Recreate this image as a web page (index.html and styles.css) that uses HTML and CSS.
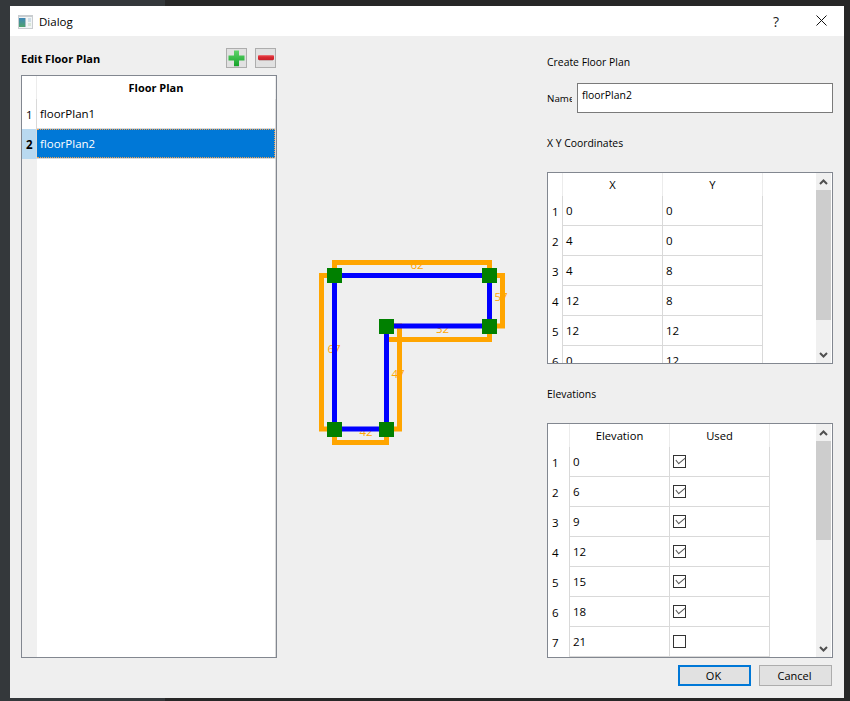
FILE: index.html
```html
<!DOCTYPE html>
<html lang="en">
<head>
<meta charset="utf-8">
<title>Dialog</title>
<link rel="stylesheet" href="styles.css">
</head>
<body>
<div class="window">
  <header class="titlebar">
    <svg class="app-icon" width="15" height="14" viewBox="0 0 15 14">
      <defs>
        <linearGradient id="pane" x1="0" y1="0" x2="0" y2="1">
          <stop offset="0" stop-color="#3d86b8"/>
          <stop offset="1" stop-color="#4fa36c"/>
        </linearGradient>
      </defs>
      <rect x="0" y="0" width="15" height="14" fill="#c9cdd0"/>
      <rect x="1" y="2" width="13" height="11" fill="#f2f5f6"/>
      <rect x="1" y="3" width="6" height="9" fill="url(#pane)"/>
      <rect x="7" y="3" width="1" height="9" fill="#a9bcc4"/>
      <rect x="10" y="3" width="3" height="4" fill="#cfdde6"/>
      <rect x="10" y="8" width="3" height="3" fill="#d8e6d8"/>
    </svg>
    <span class="title">Dialog</span>
    <span class="help">?</span>
    <svg class="close" width="11" height="11" viewBox="0 0 11 11">
      <path d="M0.500 0.500L10.500 10.500M10.500 0.500L0.500 10.500" stroke="#111" stroke-width="1" fill="none"/>
    </svg>
  </header>
  <main class="content">
    <section class="left">
      <div class="left-head">
        <h2 class="edit-title">Edit Floor Plan</h2>
        <div class="tool-buttons">
          <button class="tool">
            <svg width="17" height="17" viewBox="0 0 17 17">
              <defs>
                <linearGradient id="plus" x1="0" y1="0" x2="0" y2="1">
                  <stop offset="0" stop-color="#5fd46a"/>
                  <stop offset="1" stop-color="#16a32a"/>
                </linearGradient>
              </defs>
              <path d="M6 0.500h5v5h5.500v5H11v5.500H6V10.500H0.500v-5H6z" fill="url(#plus)"/>
              <rect x="6" y="16" width="5" height="1" fill="#b9c4ba"/>
            </svg>
          </button>
          <button class="tool">
            <svg width="16" height="6" viewBox="0 0 16 6">
              <defs>
                <linearGradient id="minus" x1="0" y1="0" x2="0" y2="1">
                  <stop offset="0" stop-color="#ee7f84"/>
                  <stop offset="0.350" stop-color="#dc2a32"/>
                  <stop offset="1" stop-color="#c9202a"/>
                </linearGradient>
              </defs>
              <rect width="16" height="5" rx="1" fill="url(#minus)"/>
              <rect x="1" y="5" width="14" height="1" fill="#c8b4b4"/>
            </svg>
          </button>
        </div>
      </div>
      <div class="table-box plans">
        <table class="grid">
          <thead>
            <tr><th class="corner"></th><th class="col-head strong">Floor Plan</th></tr>
          </thead>
          <tbody>
            <tr><th class="row-head">1</th><td>floorPlan1</td></tr>
            <tr class="selected"><th class="row-head">2</th><td><span class="focus">floorPlan2</span></td></tr>
            <tr class="filler"><th class="row-head"></th><td></td></tr>
          </tbody>
        </table>
      </div>
    </section>

    <svg class="plan" width="270" height="662" viewBox="277 36 270 662">
      <g class="dim">
        <text x="417" y="269">62</text>
        <text x="501" y="301">57</text>
        <text x="442.500" y="333">32</text>
        <text x="398" y="378">47</text>
        <text x="334" y="353">67</text>
        <text x="366" y="436">42</text>
      </g>
      <g class="offset">
        <polyline points="334.500,275.500 334.500,262.500 489.500,262.500 489.500,275.500"/>
        <polyline points="489.500,275.500 502.500,275.500 502.500,326 489.500,326"/>
        <polyline points="489.500,326 489.500,339.500 386.500,339.500 386.500,326"/>
        <polyline points="386.500,326 399.500,326 399.500,429 386.500,429"/>
        <polyline points="386.500,429 386.500,442.500 334.500,442.500 334.500,429"/>
        <polyline points="334.500,429 321.500,429 321.500,275.500 334.500,275.500"/>
      </g>
      <polygon class="outline" points="334.500,275.500 489.500,275.500 489.500,326 386.500,326 386.500,429 334.500,429"/>
      <g class="nodes">
        <rect x="327" y="268" width="15" height="15"/>
        <rect x="482" y="268" width="15" height="15"/>
        <rect x="482" y="319" width="15" height="15"/>
        <rect x="379" y="319" width="15" height="15"/>
        <rect x="379" y="422" width="15" height="15"/>
        <rect x="327" y="422" width="15" height="15"/>
      </g>
    </svg>

    <section class="right">
      <h3 class="label create-label">Create Floor Plan</h3>
      <div class="name-row">
        <label class="name-label" for="name">Name</label>
        <div class="name-input" id="name">floorPlan2</div>
      </div>
      <h3 class="label coords-label">X Y Coordinates</h3>
      <div class="table-box coords">
        <div class="table-clip">
          <table class="grid">
            <thead>
              <tr><th class="corner"></th><th class="col-head">X</th><th class="col-head">Y</th></tr>
            </thead>
            <tbody>
              <tr><th class="row-head">1</th><td>0</td><td>0</td></tr>
              <tr><th class="row-head">2</th><td>4</td><td>0</td></tr>
              <tr><th class="row-head">3</th><td>4</td><td>8</td></tr>
              <tr><th class="row-head">4</th><td>12</td><td>8</td></tr>
              <tr><th class="row-head">5</th><td>12</td><td>12</td></tr>
              <tr><th class="row-head">6</th><td>0</td><td>12</td></tr>
            </tbody>
          </table>
        </div>
        <div class="scrollbar">
          <div class="arrow"><svg width="9" height="6" viewBox="0 0 9 6"><path d="M1 5L4.500 1.500L8 5" stroke="#505050" stroke-width="2" fill="none"/></svg></div>
          <div class="thumb coords-thumb"></div>
          <div class="track"></div>
          <div class="arrow"><svg width="9" height="6" viewBox="0 0 9 6"><path d="M1 1L4.500 4.500L8 1" stroke="#505050" stroke-width="2" fill="none"/></svg></div>
        </div>
      </div>
      <h3 class="label elev-label">Elevations</h3>
      <div class="table-box elevs">
        <div class="table-clip">
          <table class="grid">
            <thead>
              <tr><th class="corner"></th><th class="col-head">Elevation</th><th class="col-head">Used</th></tr>
            </thead>
            <tbody>
              <tr><th class="row-head">1</th><td>0</td><td><span class="check on"></span></td></tr>
              <tr><th class="row-head">2</th><td>6</td><td><span class="check on"></span></td></tr>
              <tr><th class="row-head">3</th><td>9</td><td><span class="check on"></span></td></tr>
              <tr><th class="row-head">4</th><td>12</td><td><span class="check on"></span></td></tr>
              <tr><th class="row-head">5</th><td>15</td><td><span class="check on"></span></td></tr>
              <tr><th class="row-head">6</th><td>18</td><td><span class="check on"></span></td></tr>
              <tr><th class="row-head">7</th><td>21</td><td><span class="check"></span></td></tr>
            </tbody>
          </table>
        </div>
        <div class="scrollbar">
          <div class="arrow"><svg width="9" height="6" viewBox="0 0 9 6"><path d="M1 5L4.500 1.500L8 5" stroke="#505050" stroke-width="2" fill="none"/></svg></div>
          <div class="thumb elevs-thumb"></div>
          <div class="track"></div>
          <div class="arrow"><svg width="9" height="6" viewBox="0 0 9 6"><path d="M1 1L4.500 4.500L8 1" stroke="#505050" stroke-width="2" fill="none"/></svg></div>
        </div>
      </div>
      <div class="actions">
        <button class="btn default">OK</button>
        <button class="btn">Cancel</button>
      </div>
    </section>
  </main>
</div>
</body>
</html>
```

FILE: styles.css
```css
* { box-sizing: border-box; }

html, body {
  margin: 0;
  height: 701px;
  overflow: hidden;
}

body {
  padding: 6px 6px 3px 10px;
  background: linear-gradient(90deg, #34383b 0 165px, #272727 165px);
  font-family: "Open Sans", "Noto Sans", sans-serif;
  font-size: 11.5px;
  color: #000;
}

.window {
  width: 834px;
  height: 692px;
  display: flex;
  flex-direction: column;
  background: #efefef;
}

/* title bar */
.titlebar {
  height: 30px;
  flex: none;
  display: flex;
  align-items: center;
  background: #fff;
  padding-left: 8px;
}
.app-icon { margin-right: 6px; margin-top: 1px; }
.title { font-size: 11.5px; flex: 1; }
.help { font-size: 14px; color: #222; margin-right: 37px; }
.close { margin-right: 17px; margin-top: -2px; }

/* columns */
.content {
  flex: 1;
  display: flex;
  padding-left: 11px;
  min-height: 0;
}
.left {
  width: 256px;
  flex: none;
  display: flex;
  flex-direction: column;
}
.plan { flex: none; display: block; }
.right {
  width: 286px;
  flex: none;
  display: flex;
  flex-direction: column;
}

/* left column */
.left-head {
  height: 39px;
  padding-top: 12px;
  display: flex;
  align-items: flex-start;
  justify-content: space-between;
}
.edit-title {
  margin: 3px 0 0;
  font-size: 11px;
  font-weight: 700;
  line-height: 16px;
}
.tool-buttons { display: flex; gap: 8px; margin-right: 1px; }
.tool {
  width: 21px;
  height: 20px;
  padding: 0;
  background: #e1e1e1;
  border: 1px solid #adadad;
  display: flex;
  align-items: center;
  justify-content: center;
}

/* tables */
.table-box {
  border: 1px solid #828790;
  background: #fff;
  display: flex;
  overflow: hidden;
}
.plans { height: 583px; }
.coords { height: 192px; }
.elevs { height: 235px; }
.table-clip { width: 268px; flex: none; overflow: hidden; }

.grid {
  border-collapse: separate;
  border-spacing: 0;
  table-layout: fixed;
}
.grid th, .grid td {
  padding: 0;
  font-weight: 400;
  font-size: 11.5px;
  height: 30px;
  background: #fff;
  white-space: nowrap;
}
.grid td {
  padding-left: 3px;
  border-right: 1px solid #d9d9d9;
  border-bottom: 1px solid #d9d9d9;
  text-align: left;
}
.grid .corner, .grid .col-head {
  height: 23px;
  border-right: 1px solid #ececec;
  text-align: center;
  font-size: 11.2px;
}
.grid .strong { font-weight: 700; font-size: 11px; }
.grid .row-head {
  border-right: 1px solid #d9d9d9;
  text-align: left;
  padding-left: 4px;
}

.plans .corner, .plans .row-head { width: 15px; min-width: 15px; }
.plans .col-head, .plans td { width: 239px; }
.plans .filler td { height: 498px; border-bottom: 0; }
.grid .filler .row-head { height: 498px; background: #f0f0f0; border-right: 0; }

.grid .selected .row-head { background: #b9d9f0; font-weight: 700; }
.grid .selected td { padding: 0; background: #0078d7; color: #fff; }
.focus {
  display: flex;
  align-items: center;
  height: 29px;
  padding-left: 3px;
  border: 1px dotted #f0a050;
  border-left-width: 0;
}

.coords .corner, .coords .row-head { width: 15px; }
.coords .col-head, .coords td { width: 100px; }
.elevs .corner, .elevs .row-head { width: 22px; }
.elevs .col-head, .elevs td { width: 100px; }

/* scrollbar */
.scrollbar {
  width: 15px;
  flex: none;
  display: flex;
  flex-direction: column;
  background: #f0f0f0;
}
.arrow {
  height: 17px;
  flex: none;
  display: flex;
  align-items: center;
  justify-content: center;
}
.thumb { background: #cdcdcd; flex: none; }
.coords-thumb { height: 130px; }
.elevs-thumb { height: 99px; }
.track { flex: 1; }

/* right column */
.label {
  margin: 0;
  font-size: 10.4px;
  font-weight: 400;
  line-height: 16px;
}
.create-label { margin-top: 18px; }
.name-row {
  margin-top: 13px;
  height: 30px;
  display: flex;
  align-items: stretch;
}
.name-label {
  width: 25px;
  margin-top: 8px;
  font-size: 9.8px;
  line-height: 16px;
  overflow: hidden;
  flex: none;
  white-space: nowrap;
}
.name-input {
  margin-left: 5px;
  flex: 1;
  background: #fff;
  border: 1px solid #7a7a7a;
  padding: 3px 0 0 4px;
  font-size: 10.4px;
  line-height: 16px;
}
.coords-label { margin-top: 22px; }
.coords { margin-top: 21px; }
.elev-label { margin-top: 22px; }
.elevs { margin-top: 21px; }

.check {
  display: block;
  position: relative;
  width: 13px;
  height: 13px;
  border: 1px solid #333;
  background: #fff;
}
.check.on::after {
  content: "";
  position: absolute;
  left: 2px;
  top: 1px;
  width: 8px;
  height: 4px;
  border-left: 1px solid #555;
  border-bottom: 1px solid #555;
  transform: rotate(-40deg);
}

.actions {
  margin-top: 7px;
  display: flex;
  justify-content: flex-end;
  gap: 8px;
  padding-right: 1px;
}
.btn {
  width: 73px;
  height: 21px;
  padding: 0 2px 0 0;
  background: #e1e1e1;
  border: 1px solid #adadad;
  font-family: inherit;
  font-size: 11px;
  color: #000;
}
.btn.default { border: 2px solid #0078d7; }

/* floor plan drawing */
.dim text {
  font-size: 11.5px;
  fill: #ffa500;
  text-anchor: middle;
}
.offset polyline {
  fill: none;
  stroke: #ffa500;
  stroke-width: 5;
  stroke-linecap: square;
}
.outline {
  fill: none;
  stroke: #0000ff;
  stroke-width: 5;
}
.nodes rect { fill: #008000; }
```
